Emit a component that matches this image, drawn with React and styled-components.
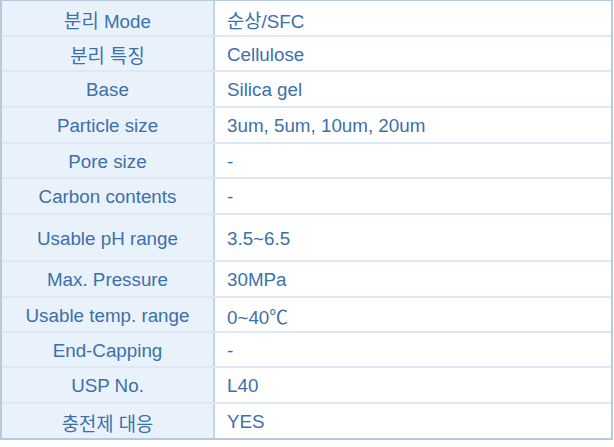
import React from "react";
import styled, { createGlobalStyle } from "styled-components";

const Global = createGlobalStyle`
  html, body { margin: 0; padding: 0; background: #ffffff; }
  body { font-family: "Liberation Sans", "Noto Sans CJK KR", Arial, sans-serif; }
`;

const Table = styled.div`
  width: 613px;
  box-sizing: border-box;
  border-top: 1px solid #b7c9dd;
  border-left: 2px solid #b7c9dd;
  border-right: 2px solid #b7c9dd;
  border-bottom: 2px solid #b7c9dd;
  display: flex;
  flex-direction: column;
`;

const Row = styled.div`
  display: grid;
  grid-template-columns: 213px 1fr;
  height: ${(p) => p.$h}px;
  box-sizing: border-box;
  border-bottom: ${(p) => (p.$last ? "none" : "2px solid #dde8f4")};
`;

const Label = styled.div`
  background: #e9f2fb;
  border-right: 2px solid #c3d4e7;
  display: flex;
  align-items: center;
  justify-content: center;
  font-size: 18.8px;
  color: #3c70aa;
  padding-top: 2px;
  box-sizing: border-box;
`;

const Value = styled.div`
  background: #ffffff;
  display: flex;
  align-items: center;
  padding: 2px 0 0 12px;
  font-size: 18.8px;
  color: #3c70aa;
  box-sizing: border-box;
`;

const rows = [
  ["분리 Mode", "순상/SFC", 36],
  ["분리 특징", "Cellulose", 35],
  ["Base", "Silica gel", 36],
  ["Particle size", "3um, 5um, 10um, 20um", 36],
  ["Pore size", "-", 35],
  ["Carbon contents", "-", 36],
  ["Usable pH range", "3.5~6.5", 47],
  ["Max. Pressure", "30MPa", 36],
  ["Usable temp. range", "0~40℃", 35],
  ["End-Capping", "-", 35],
  ["USP No.", "L40", 36],
  ["충전제 대응", "YES", 34],
];

export default function App() {
  return (
    <>
      <Global />
      <Table>
        {rows.map(([l, v, h], i) => (
          <Row key={l} $h={h} $last={i === rows.length - 1}>
            <Label>{l}</Label>
            <Value>{v}</Value>
          </Row>
        ))}
      </Table>
    </>
  );
}
